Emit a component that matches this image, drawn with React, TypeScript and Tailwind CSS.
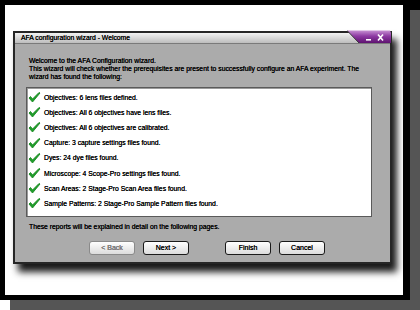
const ITEMS = [
  "Objectives: 6 lens files defined.",
  "Objectives: All 6 objectives have lens files.",
  "Objectives: All 6 objectives are calibrated.",
  "Capture: 3 capture settings files found.",
  "Dyes: 24 dye files found.",
  "Microscope: 4 Scope-Pro settings files found.",
  "Scan Areas: 2 Stage-Pro Scan Area files found.",
  "Sample Patterns: 2 Stage-Pro Sample Pattern files found.",
];

function Check() {
  return (
    <svg width="13" height="11" viewBox="0 0 13 11" className="shrink-0">
      <path d="M1 6 L4.5 10 L12 1 L11 0.5 L4.5 7 L2.5 4.5 Z" fill="#1f9e2a" stroke="#1a8a22" strokeWidth="0.9" strokeLinejoin="round" />
    </svg>
  );
}

function Btn({ label, disabled }: { label: string; disabled?: boolean }) {
  return (
    <div
      className={`flex h-[14px] w-[46px] items-center justify-center rounded-[3px] border bg-gradient-to-b from-white to-[#dcdcdc] text-[7px] ${
        disabled ? "border-[#8a8a8a] text-[#9a9a9a]" : "border-[#1a1a1a] text-black"
      }`}
    >
      {label}
    </div>
  );
}

export default function App() {
  return (
    <div className="relative h-[310px] w-[420px] overflow-hidden bg-white font-['Liberation_Sans',Arial,sans-serif]">
      <div className="absolute right-0 top-0 h-[10px] w-[12px] bg-black" />
      <div className="h-[300px] w-[410px] border-b-[5px] border-l-[5px] border-r-[7px] border-t-[5px] border-black bg-white shadow-[10px_10px_0_#555]">
        {/* dialog */}
        <div className="ml-[8px] mt-[26px] flex h-[233px] w-[379px] flex-col border-2 border-[#262626] bg-[#ababab] shadow-[5px_8px_7px_rgba(0,0,0,0.9)]">
          <div className="relative flex h-[10px] items-center bg-gradient-to-b from-[#f2f2f2] to-[#bdbdbd] pl-[6px] text-[6.8px] leading-none text-black [text-shadow:0_0_0.4px_#000]">
            AFA configuration wizard - Welcome
            <svg className="absolute -right-[2px] -top-[3px]" width="45" height="13" viewBox="0 0 45 13">
              <defs>
                <linearGradient id="pg" x1="0" y1="0" x2="0" y2="1">
                  <stop offset="0" stopColor="#c690d2" />
                  <stop offset="0.45" stopColor="#8e3aa3" />
                  <stop offset="1" stopColor="#5e1270" />
                </linearGradient>
              </defs>
              <polygon points="0,0.5 43,0.5 44,3 44,13 12,13" fill="url(#pg)" />
              <line x1="0" y1="0.5" x2="12" y2="13" stroke="#3a3a3a" strokeWidth="1" />
              <rect x="19" y="9" width="5" height="1.6" fill="#fff" />
              <path d="M31 4.5 L36 10.5 M36 4.5 L31 10.5" stroke="#fff" strokeWidth="1.6" />
            </svg>
          </div>
          <div className="flex flex-1 flex-col border-t border-[#7a7a7a] px-[11px] pt-[13px] text-[6.8px] leading-[8px] text-black [text-shadow:0_0_0.4px_#000]">
            <p className="px-[3px]">
              Welcome to the AFA Configuration wizard.
              <br />
              This wizard will check whether the prerequisites are present to successfully configure an AFA experiment. The
              wizard has found the following:
            </p>
            <div className="mt-[6px] h-[130px] w-[346px] border border-[#5a5a5a] bg-white pl-[1px] pt-[2px] shadow-[inset_1px_1px_0_#9a9a9a]">
              {ITEMS.map((t) => (
                <div key={t} className="flex h-[15.2px] items-center gap-[3px]">
                  <Check />
                  <span>{t}</span>
                </div>
              ))}
            </div>
            <p className="mt-[6px] px-[3px]">These reports will be explained in detail on the following pages.</p>
            <div className="mt-[10px] flex">
              <div className="ml-[63px] flex gap-[8px]">
                <Btn label="< Back" disabled />
                <Btn label="Next >" />
              </div>
              <div className="ml-[36px] flex gap-[8px]">
                <Btn label="Finish" />
                <Btn label="Cancel" />
              </div>
            </div>
          </div>
        </div>
      </div>
    </div>
  );
}
